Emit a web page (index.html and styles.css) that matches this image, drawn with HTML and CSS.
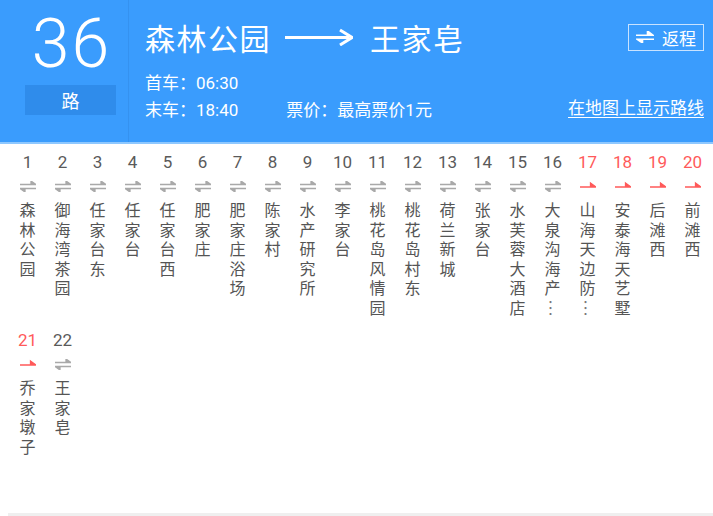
FILE: index.html
```html
<!DOCTYPE html>
<html lang="zh-CN">
<head>
<meta charset="utf-8">
<title>36路</title>
<link rel="stylesheet" href="styles.css">
</head>
<body>
<header class="hd">
  <div class="num">
    <div class="big">36</div>
    <div class="lu">路</div>
  </div>
  <div class="info">
    <div class="row1">
      <span class="title">森林公园</span>
      <svg class="arrow" width="68" height="18" viewBox="0 0 68 18"><path d="M0 9.5 H64" stroke="#fff" stroke-width="3" fill="none"/><path d="M55 2 L67 9.5 L55 17" stroke="#fff" stroke-width="3" fill="none" stroke-linejoin="miter"/></svg>
      <span class="title">王家皂</span>
      <span class="spacer"></span>
      <span class="back"><svg width="18" height="12" viewBox="0 0 18 12"><path d="M0 4.2 H17 L11.5 0 V4.2" stroke="#fff" stroke-width="1.6" fill="#fff" stroke-linejoin="miter"/><path d="M18 8.2 H1 L6.5 12 V8.2" stroke="#fff" stroke-width="1.6" fill="#fff"/></svg>返程</span>
    </div>
    <div class="times">首车：06:30</div>
    <div class="row3">
      <span>末车：18:40</span>
      <span class="price">票价：最高票价1元</span>
      <span class="spacer"></span>
      <a class="map" href="#">在地图上显示路线</a>
    </div>
  </div>
</header>
<main class="stations">
  <div class="st"><div class="no">1</div><svg class="ic" viewBox="0 0 16 11"><path d="M0 3.5 H16 L11 0 V3.5 Z M16 7.5 H0 L5 11 V7.5 Z" fill="#a9a9a9" stroke="#a9a9a9" stroke-width="1.3"/></svg><div class="name">森林公园</div></div>
  <div class="st"><div class="no">2</div><svg class="ic" viewBox="0 0 16 11"><path d="M0 3.5 H16 L11 0 V3.5 Z M16 7.5 H0 L5 11 V7.5 Z" fill="#a9a9a9" stroke="#a9a9a9" stroke-width="1.3"/></svg><div class="name">御海湾茶园</div></div>
  <div class="st"><div class="no">3</div><svg class="ic" viewBox="0 0 16 11"><path d="M0 3.5 H16 L11 0 V3.5 Z M16 7.5 H0 L5 11 V7.5 Z" fill="#a9a9a9" stroke="#a9a9a9" stroke-width="1.3"/></svg><div class="name">任家台东</div></div>
  <div class="st"><div class="no">4</div><svg class="ic" viewBox="0 0 16 11"><path d="M0 3.5 H16 L11 0 V3.5 Z M16 7.5 H0 L5 11 V7.5 Z" fill="#a9a9a9" stroke="#a9a9a9" stroke-width="1.3"/></svg><div class="name">任家台</div></div>
  <div class="st"><div class="no">5</div><svg class="ic" viewBox="0 0 16 11"><path d="M0 3.5 H16 L11 0 V3.5 Z M16 7.5 H0 L5 11 V7.5 Z" fill="#a9a9a9" stroke="#a9a9a9" stroke-width="1.3"/></svg><div class="name">任家台西</div></div>
  <div class="st"><div class="no">6</div><svg class="ic" viewBox="0 0 16 11"><path d="M0 3.5 H16 L11 0 V3.5 Z M16 7.5 H0 L5 11 V7.5 Z" fill="#a9a9a9" stroke="#a9a9a9" stroke-width="1.3"/></svg><div class="name">肥家庄</div></div>
  <div class="st"><div class="no">7</div><svg class="ic" viewBox="0 0 16 11"><path d="M0 3.5 H16 L11 0 V3.5 Z M16 7.5 H0 L5 11 V7.5 Z" fill="#a9a9a9" stroke="#a9a9a9" stroke-width="1.3"/></svg><div class="name">肥家庄浴场</div></div>
  <div class="st"><div class="no">8</div><svg class="ic" viewBox="0 0 16 11"><path d="M0 3.5 H16 L11 0 V3.5 Z M16 7.5 H0 L5 11 V7.5 Z" fill="#a9a9a9" stroke="#a9a9a9" stroke-width="1.3"/></svg><div class="name">陈家村</div></div>
  <div class="st"><div class="no">9</div><svg class="ic" viewBox="0 0 16 11"><path d="M0 3.5 H16 L11 0 V3.5 Z M16 7.5 H0 L5 11 V7.5 Z" fill="#a9a9a9" stroke="#a9a9a9" stroke-width="1.3"/></svg><div class="name">水产研究所</div></div>
  <div class="st"><div class="no">10</div><svg class="ic" viewBox="0 0 16 11"><path d="M0 3.5 H16 L11 0 V3.5 Z M16 7.5 H0 L5 11 V7.5 Z" fill="#a9a9a9" stroke="#a9a9a9" stroke-width="1.3"/></svg><div class="name">李家台</div></div>
  <div class="st"><div class="no">11</div><svg class="ic" viewBox="0 0 16 11"><path d="M0 3.5 H16 L11 0 V3.5 Z M16 7.5 H0 L5 11 V7.5 Z" fill="#a9a9a9" stroke="#a9a9a9" stroke-width="1.3"/></svg><div class="name">桃花岛风情园</div></div>
  <div class="st"><div class="no">12</div><svg class="ic" viewBox="0 0 16 11"><path d="M0 3.5 H16 L11 0 V3.5 Z M16 7.5 H0 L5 11 V7.5 Z" fill="#a9a9a9" stroke="#a9a9a9" stroke-width="1.3"/></svg><div class="name">桃花岛村东</div></div>
  <div class="st"><div class="no">13</div><svg class="ic" viewBox="0 0 16 11"><path d="M0 3.5 H16 L11 0 V3.5 Z M16 7.5 H0 L5 11 V7.5 Z" fill="#a9a9a9" stroke="#a9a9a9" stroke-width="1.3"/></svg><div class="name">荷兰新城</div></div>
  <div class="st"><div class="no">14</div><svg class="ic" viewBox="0 0 16 11"><path d="M0 3.5 H16 L11 0 V3.5 Z M16 7.5 H0 L5 11 V7.5 Z" fill="#a9a9a9" stroke="#a9a9a9" stroke-width="1.3"/></svg><div class="name">张家台</div></div>
  <div class="st"><div class="no">15</div><svg class="ic" viewBox="0 0 16 11"><path d="M0 3.5 H16 L11 0 V3.5 Z M16 7.5 H0 L5 11 V7.5 Z" fill="#a9a9a9" stroke="#a9a9a9" stroke-width="1.3"/></svg><div class="name">水芙蓉大酒店</div></div>
  <div class="st"><div class="no">16</div><svg class="ic" viewBox="0 0 16 11"><path d="M0 3.5 H16 L11 0 V3.5 Z M16 7.5 H0 L5 11 V7.5 Z" fill="#a9a9a9" stroke="#a9a9a9" stroke-width="1.3"/></svg><div class="name">大泉沟海产</div><div class="dots">︙</div></div>
  <div class="st red"><div class="no">17</div><svg class="ic" viewBox="0 0 16 11"><path d="M0 6 H16 L10.5 2 V6 Z" fill="#ff5a5a" stroke="#ff5a5a" stroke-width="1.3"/></svg><div class="name">山海天边防</div><div class="dots">︙</div></div>
  <div class="st red"><div class="no">18</div><svg class="ic" viewBox="0 0 16 11"><path d="M0 6 H16 L10.5 2 V6 Z" fill="#ff5a5a" stroke="#ff5a5a" stroke-width="1.3"/></svg><div class="name">安泰海天艺墅</div></div>
  <div class="st red"><div class="no">19</div><svg class="ic" viewBox="0 0 16 11"><path d="M0 6 H16 L10.5 2 V6 Z" fill="#ff5a5a" stroke="#ff5a5a" stroke-width="1.3"/></svg><div class="name">后滩西</div></div>
  <div class="st red"><div class="no">20</div><svg class="ic" viewBox="0 0 16 11"><path d="M0 6 H16 L10.5 2 V6 Z" fill="#ff5a5a" stroke="#ff5a5a" stroke-width="1.3"/></svg><div class="name">前滩西</div></div>
  <div class="st red"><div class="no">21</div><svg class="ic" viewBox="0 0 16 11"><path d="M0 6 H16 L10.5 2 V6 Z" fill="#ff5a5a" stroke="#ff5a5a" stroke-width="1.3"/></svg><div class="name">乔家墩子</div></div>
  <div class="st"><div class="no">22</div><svg class="ic" viewBox="0 0 16 11"><path d="M0 3.5 H16 L11 0 V3.5 Z M16 7.5 H0 L5 11 V7.5 Z" fill="#a9a9a9" stroke="#a9a9a9" stroke-width="1.3"/></svg><div class="name">王家皂</div></div>
</main>
<div class="foot"></div>
</body>
</html>
```
FILE: styles.css
```css
html, body {
  margin: 0;
  padding: 0;
  background: #fff;
}
body {
  width: 713px;
  height: 516px;
  overflow: hidden;
  font-family: "Noto Sans CJK SC", sans-serif;
}
.hd {
  display: flex;
  height: 142px;
  background: #3a9cfd;
  border-bottom: 2px solid #8ec8ff;
  color: #fff;
}
.num {
  width: 128px;
  border-right: 1px solid #3592f0;
  display: flex;
  flex-direction: column;
  align-items: center;
  flex-shrink: 0;
}
.big {
  font-family: "Roboto", "Liberation Sans", sans-serif;
  font-weight: 300;
  font-size: 68px;
  line-height: 68px;
  margin-top: 10px;
  margin-left: 15px;
  letter-spacing: 2px;
}
.lu {
  width: 91px;
  height: 30px;
  margin-top: 7px;
  margin-left: 13px;
  background: #2f8ceb;
  font-size: 18px;
  line-height: 30px;
  text-align: center;
}
.info {
  flex: 1;
  padding: 19px 9px 0 16px;
  display: flex;
  flex-direction: column;
}
.row1 {
  display: flex;
  align-items: center;
  height: 36px;
}
.title {
  font-size: 30px;
  line-height: 36px;
  letter-spacing: 1.5px;
}
.arrow {
  margin: 0 17px 0 14px;
}
.spacer {
  flex: 1;
}
.back {
  display: flex;
  align-items: center;
  gap: 8px;
  box-sizing: border-box;
  width: 76px;
  height: 27px;
  padding-left: 7px;
  border: 1px solid #c9e3ff;
  font-size: 17px;
  line-height: 25px;
}
.times {
  margin-top: 17px;
  font-family: "Roboto", "Noto Sans CJK SC", sans-serif;
  font-size: 17px;
  line-height: 22px;
}
.row3 {
  display: flex;
  align-items: center;
  margin-top: 5px;
  font-family: "Roboto", "Noto Sans CJK SC", sans-serif;
  font-size: 17px;
  line-height: 22px;
}
.price {
  margin-left: 48px;
}
.map {
  color: #fff;
  font-family: "Noto Sans CJK SC", sans-serif;
  font-size: 17px;
  text-decoration: underline;
  text-underline-offset: 3px;
  margin-top: -6px;
}
.stations {
  display: grid;
  grid-template-columns: repeat(20, 35px);
  row-gap: 13px;
  padding: 8px 0 0 10px;
  height: 361px;
  box-sizing: border-box;
  align-content: start;
}
.st {
  display: flex;
  flex-direction: column;
  align-items: center;
  height: 165px;
}
.no {
  font-family: "Roboto", "Liberation Sans", sans-serif;
  font-size: 17px;
  line-height: 20px;
  color: #5a5a5a;
}
.red .no {
  color: #ff5a5a;
}
.ic {
  width: 16px;
  height: 11px;
  margin-top: 9px;
}
.name {
  margin-top: 8px;
  width: 18px;
  font-size: 16px;
  line-height: 19.5px;
  color: #555;
  word-break: break-all;
  text-align: center;
}
.dots {
  width: 18px;
  font-size: 16px;
  line-height: 19.5px;
  color: #777;
  text-align: center;
  margin-left: -4px;
}
.foot {
  margin-left: 8px;
  height: 3px;
  background: #efefef;
  margin-top: 8px;
}
```
